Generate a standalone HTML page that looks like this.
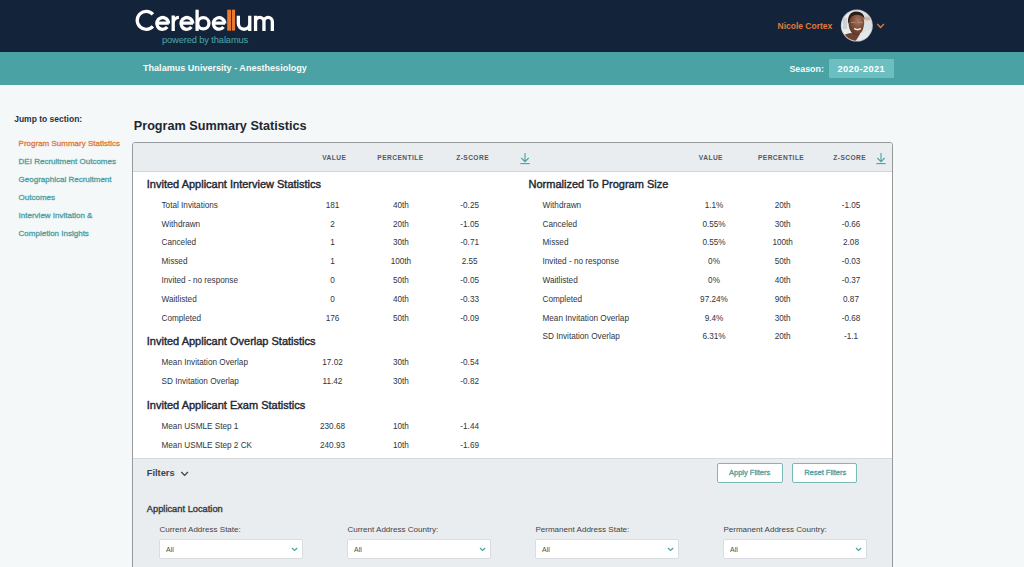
<!DOCTYPE html>
<html><head><meta charset="utf-8"><title>Program Summary Statistics</title>
<style>
html,body{margin:0;padding:0;}
body{width:1024px;height:567px;overflow:hidden;position:relative;background:#f4f8f9;font-family:"Liberation Sans",sans-serif;}
.t{position:absolute;white-space:nowrap;line-height:1;}
</style></head><body>
<div style="position:absolute;left:0px;top:0px;width:1024px;height:52px;background:#132339;"></div>
<div style="position:absolute;left:0px;top:52px;width:1024px;height:33px;background:#4aa2a4;"></div>
<svg style="position:absolute;left:0;top:0" width="300" height="52" viewBox="0 0 300 52">
<g fill="none" stroke="#fff" stroke-width="3.3" stroke-linecap="butt">
<path d="M152.9 14.3 A9 9 0 1 0 152.9 26.3"/>
<path d="M156.40 23.05 H168.80 M168.50 23.45 A5.9 5.9 0 1 0 167.25 27.08"/>
<path d="M173.2 30.9 V15.6 M173.2 22.5 A5.8 5.8 0 0 1 178.9 17.4"/>
<path d="M180.60 23.05 H193.00 M192.70 23.45 A5.9 5.9 0 1 0 191.45 27.08"/>
<path d="M197.1 9.7 V30.9"/>
<circle cx="203.3" cy="23.3" r="5.65"/>
<path d="M212.95 23.05 H225.05 M224.75 23.45 A5.75 5.75 0 1 0 223.53 26.99"/>
<path d="M238.35 15.8 V23.55 A5.7 5.7 0 0 0 249.75 23.55 M249.75 15.8 V30.9"/>
<path d="M255.55 30.9 V15.8 M255.55 21.65 A4.2 4.2 0 0 1 263.95 21.65 V30.9 M263.95 21.65 A4.2 4.2 0 0 1 272.35 21.65 V30.9"/>
</g>
<rect x="227.2" y="9.7" width="4" height="20.9" fill="#e8792f"/>
<rect x="232.0" y="9.7" width="3.1" height="20.9" fill="#e8792f"/>
</svg>
<div class="t" style="left:162.00px;top:35.63px;font-size:9.3px;color:#4a9fa1;letter-spacing:-0.12px;-webkit-text-stroke:0.1px #4a9fa1;">powered by thalamus</div>
<div class="t" style="left:777.50px;top:21.90px;font-size:8.5px;color:#e27a3a;font-weight:700;">Nicole Cortex</div>
<svg style="position:absolute;left:839px;top:8px" width="36" height="36" viewBox="0 0 36 36">
<defs><clipPath id="cp"><circle cx="17.8" cy="17.6" r="15.1"/></clipPath>
<radialGradient id="face" cx="0.6" cy="0.35" r="0.65"><stop offset="0" stop-color="#a87a60"/><stop offset="0.5" stop-color="#84533c"/><stop offset="1" stop-color="#5e3728"/></radialGradient>
<linearGradient id="bgg" x1="0" y1="0" x2="1" y2="0"><stop offset="0" stop-color="#eceef0"/><stop offset="1" stop-color="#dadde0"/></linearGradient></defs>
<circle cx="17.8" cy="17.6" r="16" fill="#c3c7cb"/>
<g clip-path="url(#cp)">
<rect x="0" y="0" width="36" height="36" fill="url(#bgg)"/>
<rect x="4" y="10" width="4" height="11" fill="#cdd1d4"/>
<ellipse cx="28" cy="10.5" rx="3.6" ry="2" fill="#cfb5a2"/>
<path d="M1 30 Q7 25 13 25 L21 26 L15 36 L1 36 Z" fill="#6f4332"/>
<path d="M14 36 L22 27 Q28 21 36 22 V36 Z" fill="#e6e9ec"/>
<path d="M9.6 15 Q9.8 5.5 17.3 5.2 Q25 5.5 25.2 14.5 Q25 23 20 26.5 Q17 28 14 26 Q9.5 22 9.6 15 Z" fill="url(#face)"/>
<path d="M9 16 Q8 4 17 3.4 Q25.5 3.6 25.4 11 Q23 6.8 17.5 6.8 Q12 7 10.5 12 Q10 14 9 16 Z" fill="#2b1d19"/>
<path d="M11.8 14.8 Q14 13.6 16.4 14.8 M19.2 14.8 Q21.5 13.6 23.8 14.8" stroke="#b9a59a" stroke-width="0.7" fill="none"/>
<path d="M15 20.6 Q18.6 23.6 22 20.6 Q18.6 22 15 20.6 Z" fill="#f3eee9" stroke="#f3eee9" stroke-width="0.9"/>
</g></svg>
<svg style="position:absolute;left:876px;top:22px" width="10" height="8" viewBox="0 0 10 8"><path d="M1.3 2 L4.6 5.4 L7.9 2" fill="none" stroke="#e27a3a" stroke-width="1.4"/></svg>
<div class="t" style="left:143.00px;top:64.42px;font-size:9.07px;color:#f4fbfb;font-weight:700;">Thalamus University - Anesthesiology</div>
<div class="t" style="left:789.40px;top:64.67px;font-size:8.9px;color:#f4fbfb;font-weight:700;">Season:</div>
<div style="position:absolute;left:829px;top:59px;width:65px;height:19px;background:#6cbfc1;border-radius:1px;"></div>
<div class="t" style="left:837.60px;top:64.71px;font-size:9.2px;color:#fff;font-weight:700;letter-spacing:0.38px;">2020-2021</div>
<div class="t" style="left:14.20px;top:114.80px;font-size:8.5px;color:#2a323d;font-weight:700;">Jump to section:</div>
<div class="t" style="left:18.60px;top:139.73px;font-size:8.0px;color:#e27a3a;-webkit-text-stroke:0.3px #e27a3a;">Program Summary Statistics</div>
<div class="t" style="left:18.60px;top:157.69px;font-size:8.0px;color:#4fa0a2;-webkit-text-stroke:0.3px #4fa0a2;">DEI Recruitment Outcomes</div>
<div class="t" style="left:18.60px;top:175.65px;font-size:8.0px;color:#4fa0a2;-webkit-text-stroke:0.3px #4fa0a2;">Geographical Recruitment</div>
<div class="t" style="left:18.60px;top:193.61px;font-size:8.0px;color:#4fa0a2;-webkit-text-stroke:0.3px #4fa0a2;">Outcomes</div>
<div class="t" style="left:18.60px;top:211.57px;font-size:8.0px;color:#4fa0a2;-webkit-text-stroke:0.3px #4fa0a2;">Interview Invitation &amp;</div>
<div class="t" style="left:18.60px;top:229.53px;font-size:8.0px;color:#4fa0a2;-webkit-text-stroke:0.3px #4fa0a2;">Completion Insights</div>
<div class="t" style="left:133.80px;top:119.99px;font-size:12.65px;color:#1e2733;font-weight:700;">Program Summary Statistics</div>
<div style="position:absolute;left:132px;top:142px;width:761px;height:500px;background:#fff;border:1px solid #97999c;border-radius:3px;box-sizing:border-box;"></div>
<div style="position:absolute;left:133px;top:143px;width:759px;height:28px;background:#eaedf0;border-radius:2px 2px 0 0;"></div>
<div style="position:absolute;left:133px;top:171px;width:759px;height:1px;background:#d0d4d8;"></div>
<div style="position:absolute;left:133px;top:458px;width:759px;height:120px;background:#eaedef;"></div>
<div style="position:absolute;left:133px;top:458px;width:759px;height:1px;background:#d6d9dc;"></div>
<div class="t" style="left:274.20px;top:155.21px;font-size:6.6px;color:#55595e;font-weight:700;letter-spacing:0.45px;width:120px;text-align:center;">VALUE</div>
<div class="t" style="left:340.50px;top:155.21px;font-size:6.6px;color:#55595e;font-weight:700;letter-spacing:0.45px;width:120px;text-align:center;">PERCENTILE</div>
<div class="t" style="left:412.60px;top:155.21px;font-size:6.6px;color:#55595e;font-weight:700;letter-spacing:0.45px;width:120px;text-align:center;">Z-SCORE</div>
<svg style="position:absolute;left:518.8px;top:151px" width="12" height="14" viewBox="0 0 12 14"><g fill="none" stroke="#4aa2a4" stroke-width="1.1"><path d="M6 2 V10.5 M2.3 7 L6 10.7 L9.7 7"/><path d="M1.3 12.6 H10.7"/></g></svg>
<div class="t" style="left:650.90px;top:155.21px;font-size:6.6px;color:#55595e;font-weight:700;letter-spacing:0.45px;width:120px;text-align:center;">VALUE</div>
<div class="t" style="left:721.10px;top:155.21px;font-size:6.6px;color:#55595e;font-weight:700;letter-spacing:0.45px;width:120px;text-align:center;">PERCENTILE</div>
<div class="t" style="left:789.70px;top:155.21px;font-size:6.6px;color:#55595e;font-weight:700;letter-spacing:0.45px;width:120px;text-align:center;">Z-SCORE</div>
<svg style="position:absolute;left:874.8px;top:151px" width="12" height="14" viewBox="0 0 12 14"><g fill="none" stroke="#4aa2a4" stroke-width="1.1"><path d="M6 2 V10.5 M2.3 7 L6 10.7 L9.7 7"/><path d="M1.3 12.6 H10.7"/></g></svg>
<div class="t" style="left:146.80px;top:179.49px;font-size:11.0px;color:#1e2733;-webkit-text-stroke:0.4px #1e2733;">Invited Applicant Interview Statistics</div>
<div class="t" style="left:161.50px;top:201.86px;font-size:8.2px;color:#2f3540;">Total Invitations</div>
<div class="t" style="left:302.50px;top:201.86px;font-size:8.2px;color:#2f3540;width:60px;text-align:center;">181</div>
<div class="t" style="left:370.90px;top:201.86px;font-size:8.2px;color:#2f3540;width:60px;text-align:center;">40th</div>
<div class="t" style="left:439.70px;top:201.86px;font-size:8.2px;color:#2f3540;width:60px;text-align:center;">-0.25</div>
<div class="t" style="left:161.50px;top:220.66px;font-size:8.2px;color:#2f3540;">Withdrawn</div>
<div class="t" style="left:302.50px;top:220.66px;font-size:8.2px;color:#2f3540;width:60px;text-align:center;">2</div>
<div class="t" style="left:370.90px;top:220.66px;font-size:8.2px;color:#2f3540;width:60px;text-align:center;">20th</div>
<div class="t" style="left:439.70px;top:220.66px;font-size:8.2px;color:#2f3540;width:60px;text-align:center;">-1.05</div>
<div class="t" style="left:161.50px;top:239.46px;font-size:8.2px;color:#2f3540;">Canceled</div>
<div class="t" style="left:302.50px;top:239.46px;font-size:8.2px;color:#2f3540;width:60px;text-align:center;">1</div>
<div class="t" style="left:370.90px;top:239.46px;font-size:8.2px;color:#2f3540;width:60px;text-align:center;">30th</div>
<div class="t" style="left:439.70px;top:239.46px;font-size:8.2px;color:#2f3540;width:60px;text-align:center;">-0.71</div>
<div class="t" style="left:161.50px;top:258.26px;font-size:8.2px;color:#2f3540;">Missed</div>
<div class="t" style="left:302.50px;top:258.26px;font-size:8.2px;color:#2f3540;width:60px;text-align:center;">1</div>
<div class="t" style="left:370.90px;top:258.26px;font-size:8.2px;color:#2f3540;width:60px;text-align:center;">100th</div>
<div class="t" style="left:439.70px;top:258.26px;font-size:8.2px;color:#2f3540;width:60px;text-align:center;">2.55</div>
<div class="t" style="left:161.50px;top:277.06px;font-size:8.2px;color:#2f3540;">Invited - no response</div>
<div class="t" style="left:302.50px;top:277.06px;font-size:8.2px;color:#2f3540;width:60px;text-align:center;">0</div>
<div class="t" style="left:370.90px;top:277.06px;font-size:8.2px;color:#2f3540;width:60px;text-align:center;">50th</div>
<div class="t" style="left:439.70px;top:277.06px;font-size:8.2px;color:#2f3540;width:60px;text-align:center;">-0.05</div>
<div class="t" style="left:161.50px;top:295.86px;font-size:8.2px;color:#2f3540;">Waitlisted</div>
<div class="t" style="left:302.50px;top:295.86px;font-size:8.2px;color:#2f3540;width:60px;text-align:center;">0</div>
<div class="t" style="left:370.90px;top:295.86px;font-size:8.2px;color:#2f3540;width:60px;text-align:center;">40th</div>
<div class="t" style="left:439.70px;top:295.86px;font-size:8.2px;color:#2f3540;width:60px;text-align:center;">-0.33</div>
<div class="t" style="left:161.50px;top:314.66px;font-size:8.2px;color:#2f3540;">Completed</div>
<div class="t" style="left:302.50px;top:314.66px;font-size:8.2px;color:#2f3540;width:60px;text-align:center;">176</div>
<div class="t" style="left:370.90px;top:314.66px;font-size:8.2px;color:#2f3540;width:60px;text-align:center;">50th</div>
<div class="t" style="left:439.70px;top:314.66px;font-size:8.2px;color:#2f3540;width:60px;text-align:center;">-0.09</div>
<div class="t" style="left:146.80px;top:336.49px;font-size:11.0px;color:#1e2733;-webkit-text-stroke:0.4px #1e2733;">Invited Applicant Overlap Statistics</div>
<div class="t" style="left:161.50px;top:359.36px;font-size:8.2px;color:#2f3540;">Mean Invitation Overlap</div>
<div class="t" style="left:302.50px;top:359.36px;font-size:8.2px;color:#2f3540;width:60px;text-align:center;">17.02</div>
<div class="t" style="left:370.90px;top:359.36px;font-size:8.2px;color:#2f3540;width:60px;text-align:center;">30th</div>
<div class="t" style="left:439.70px;top:359.36px;font-size:8.2px;color:#2f3540;width:60px;text-align:center;">-0.54</div>
<div class="t" style="left:161.50px;top:378.16px;font-size:8.2px;color:#2f3540;">SD Invitation Overlap</div>
<div class="t" style="left:302.50px;top:378.16px;font-size:8.2px;color:#2f3540;width:60px;text-align:center;">11.42</div>
<div class="t" style="left:370.90px;top:378.16px;font-size:8.2px;color:#2f3540;width:60px;text-align:center;">30th</div>
<div class="t" style="left:439.70px;top:378.16px;font-size:8.2px;color:#2f3540;width:60px;text-align:center;">-0.82</div>
<div class="t" style="left:146.80px;top:399.99px;font-size:11.0px;color:#1e2733;-webkit-text-stroke:0.4px #1e2733;">Invited Applicant Exam Statistics</div>
<div class="t" style="left:161.50px;top:422.96px;font-size:8.2px;color:#2f3540;">Mean USMLE Step 1</div>
<div class="t" style="left:302.50px;top:422.96px;font-size:8.2px;color:#2f3540;width:60px;text-align:center;">230.68</div>
<div class="t" style="left:370.90px;top:422.96px;font-size:8.2px;color:#2f3540;width:60px;text-align:center;">10th</div>
<div class="t" style="left:439.70px;top:422.96px;font-size:8.2px;color:#2f3540;width:60px;text-align:center;">-1.44</div>
<div class="t" style="left:161.50px;top:441.76px;font-size:8.2px;color:#2f3540;">Mean USMLE Step 2 CK</div>
<div class="t" style="left:302.50px;top:441.76px;font-size:8.2px;color:#2f3540;width:60px;text-align:center;">240.93</div>
<div class="t" style="left:370.90px;top:441.76px;font-size:8.2px;color:#2f3540;width:60px;text-align:center;">10th</div>
<div class="t" style="left:439.70px;top:441.76px;font-size:8.2px;color:#2f3540;width:60px;text-align:center;">-1.69</div>
<div class="t" style="left:528.50px;top:179.49px;font-size:11.0px;color:#1e2733;-webkit-text-stroke:0.4px #1e2733;">Normalized To Program Size</div>
<div class="t" style="left:542.50px;top:201.86px;font-size:8.2px;color:#2f3540;">Withdrawn</div>
<div class="t" style="left:684.00px;top:201.86px;font-size:8.2px;color:#2f3540;width:60px;text-align:center;">1.1%</div>
<div class="t" style="left:752.70px;top:201.86px;font-size:8.2px;color:#2f3540;width:60px;text-align:center;">20th</div>
<div class="t" style="left:821.00px;top:201.86px;font-size:8.2px;color:#2f3540;width:60px;text-align:center;">-1.05</div>
<div class="t" style="left:542.50px;top:220.66px;font-size:8.2px;color:#2f3540;">Canceled</div>
<div class="t" style="left:684.00px;top:220.66px;font-size:8.2px;color:#2f3540;width:60px;text-align:center;">0.55%</div>
<div class="t" style="left:752.70px;top:220.66px;font-size:8.2px;color:#2f3540;width:60px;text-align:center;">30th</div>
<div class="t" style="left:821.00px;top:220.66px;font-size:8.2px;color:#2f3540;width:60px;text-align:center;">-0.66</div>
<div class="t" style="left:542.50px;top:239.46px;font-size:8.2px;color:#2f3540;">Missed</div>
<div class="t" style="left:684.00px;top:239.46px;font-size:8.2px;color:#2f3540;width:60px;text-align:center;">0.55%</div>
<div class="t" style="left:752.70px;top:239.46px;font-size:8.2px;color:#2f3540;width:60px;text-align:center;">100th</div>
<div class="t" style="left:821.00px;top:239.46px;font-size:8.2px;color:#2f3540;width:60px;text-align:center;">2.08</div>
<div class="t" style="left:542.50px;top:258.26px;font-size:8.2px;color:#2f3540;">Invited - no response</div>
<div class="t" style="left:684.00px;top:258.26px;font-size:8.2px;color:#2f3540;width:60px;text-align:center;">0%</div>
<div class="t" style="left:752.70px;top:258.26px;font-size:8.2px;color:#2f3540;width:60px;text-align:center;">50th</div>
<div class="t" style="left:821.00px;top:258.26px;font-size:8.2px;color:#2f3540;width:60px;text-align:center;">-0.03</div>
<div class="t" style="left:542.50px;top:277.06px;font-size:8.2px;color:#2f3540;">Waitlisted</div>
<div class="t" style="left:684.00px;top:277.06px;font-size:8.2px;color:#2f3540;width:60px;text-align:center;">0%</div>
<div class="t" style="left:752.70px;top:277.06px;font-size:8.2px;color:#2f3540;width:60px;text-align:center;">40th</div>
<div class="t" style="left:821.00px;top:277.06px;font-size:8.2px;color:#2f3540;width:60px;text-align:center;">-0.37</div>
<div class="t" style="left:542.50px;top:295.86px;font-size:8.2px;color:#2f3540;">Completed</div>
<div class="t" style="left:684.00px;top:295.86px;font-size:8.2px;color:#2f3540;width:60px;text-align:center;">97.24%</div>
<div class="t" style="left:752.70px;top:295.86px;font-size:8.2px;color:#2f3540;width:60px;text-align:center;">90th</div>
<div class="t" style="left:821.00px;top:295.86px;font-size:8.2px;color:#2f3540;width:60px;text-align:center;">0.87</div>
<div class="t" style="left:542.50px;top:314.66px;font-size:8.2px;color:#2f3540;">Mean Invitation Overlap</div>
<div class="t" style="left:684.00px;top:314.66px;font-size:8.2px;color:#2f3540;width:60px;text-align:center;">9.4%</div>
<div class="t" style="left:752.70px;top:314.66px;font-size:8.2px;color:#2f3540;width:60px;text-align:center;">30th</div>
<div class="t" style="left:821.00px;top:314.66px;font-size:8.2px;color:#2f3540;width:60px;text-align:center;">-0.68</div>
<div class="t" style="left:542.50px;top:333.46px;font-size:8.2px;color:#2f3540;">SD Invitation Overlap</div>
<div class="t" style="left:684.00px;top:333.46px;font-size:8.2px;color:#2f3540;width:60px;text-align:center;">6.31%</div>
<div class="t" style="left:752.70px;top:333.46px;font-size:8.2px;color:#2f3540;width:60px;text-align:center;">20th</div>
<div class="t" style="left:821.00px;top:333.46px;font-size:8.2px;color:#2f3540;width:60px;text-align:center;">-1.1</div>
<div class="t" style="left:146.70px;top:468.90px;font-size:9.33px;color:#3f4348;font-weight:700;">Filters</div>
<svg style="position:absolute;left:180px;top:470px" width="10" height="8" viewBox="0 0 10 8"><path d="M1.3 2 L4.6 5.4 L7.9 2" fill="none" stroke="#3f4348" stroke-width="1.3"/></svg>
<div style="position:absolute;left:717px;top:463px;width:66px;height:20px;background:#fff;border:1px solid #78babc;border-radius:2px;box-sizing:border-box;"></div>
<div class="t" style="left:729.00px;top:468.65px;font-size:7.5px;color:#4aa2a4;-webkit-text-stroke:0.3px #4aa2a4;">Apply Filters</div>
<div style="position:absolute;left:792px;top:463px;width:65px;height:20px;background:#fff;border:1px solid #78babc;border-radius:2px;box-sizing:border-box;"></div>
<div class="t" style="left:804.20px;top:468.65px;font-size:7.5px;color:#4aa2a4;-webkit-text-stroke:0.3px #4aa2a4;">Reset Filters</div>
<div class="t" style="left:146.80px;top:504.53px;font-size:9.3px;color:#3a3f44;-webkit-text-stroke:0.4px #3a3f44;">Applicant Location</div>
<div class="t" style="left:159.40px;top:526.09px;font-size:8.05px;color:#3f4348;">Current Address State:</div>
<div style="position:absolute;left:159px;top:539px;width:144px;height:20px;background:#fff;border:1px solid #d9dde0;border-radius:2px;box-sizing:border-box;"></div>
<div class="t" style="left:166.00px;top:546.07px;font-size:7.0px;color:#4a4e53;">All</div>
<svg style="position:absolute;left:291.2px;top:546px" width="8" height="7" viewBox="0 0 8 7"><path d="M1 2 L3.6 4.5 L6.2 2" fill="none" stroke="#4aa2a4" stroke-width="1.2"/></svg>
<div class="t" style="left:347.40px;top:526.09px;font-size:8.05px;color:#3f4348;">Current Address Country:</div>
<div style="position:absolute;left:347px;top:539px;width:144px;height:20px;background:#fff;border:1px solid #d9dde0;border-radius:2px;box-sizing:border-box;"></div>
<div class="t" style="left:354.00px;top:546.07px;font-size:7.0px;color:#4a4e53;">All</div>
<svg style="position:absolute;left:479.2px;top:546px" width="8" height="7" viewBox="0 0 8 7"><path d="M1 2 L3.6 4.5 L6.2 2" fill="none" stroke="#4aa2a4" stroke-width="1.2"/></svg>
<div class="t" style="left:535.40px;top:526.09px;font-size:8.05px;color:#3f4348;">Permanent Address State:</div>
<div style="position:absolute;left:535px;top:539px;width:144px;height:20px;background:#fff;border:1px solid #d9dde0;border-radius:2px;box-sizing:border-box;"></div>
<div class="t" style="left:542.00px;top:546.07px;font-size:7.0px;color:#4a4e53;">All</div>
<svg style="position:absolute;left:667.2px;top:546px" width="8" height="7" viewBox="0 0 8 7"><path d="M1 2 L3.6 4.5 L6.2 2" fill="none" stroke="#4aa2a4" stroke-width="1.2"/></svg>
<div class="t" style="left:723.40px;top:526.09px;font-size:8.05px;color:#3f4348;">Permanent Address Country:</div>
<div style="position:absolute;left:723px;top:539px;width:144px;height:20px;background:#fff;border:1px solid #d9dde0;border-radius:2px;box-sizing:border-box;"></div>
<div class="t" style="left:730.00px;top:546.07px;font-size:7.0px;color:#4a4e53;">All</div>
<svg style="position:absolute;left:855.2px;top:546px" width="8" height="7" viewBox="0 0 8 7"><path d="M1 2 L3.6 4.5 L6.2 2" fill="none" stroke="#4aa2a4" stroke-width="1.2"/></svg>
</body></html>
